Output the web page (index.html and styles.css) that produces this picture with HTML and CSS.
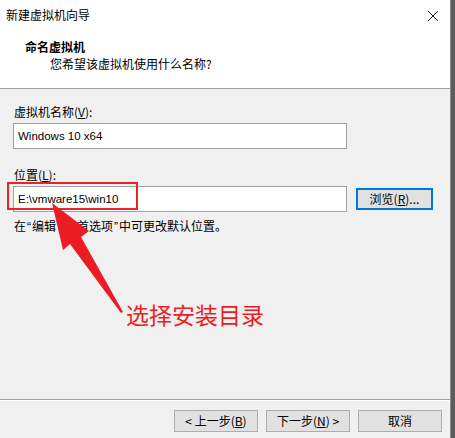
FILE: index.html
```html
<!DOCTYPE html>
<html lang="zh-CN">
<head>
<meta charset="utf-8">
<title>新建虚拟机向导</title>
<link rel="stylesheet" href="styles.css">
</head>
<body>
<div class="screen">
  <div class="window">
    <div class="titlebar">
      <span class="title">新建虚拟机向导</span>
      <svg class="close" width="12" height="12" viewBox="0 0 12 12"><path d="M1 1 L11 11 M11 1 L1 11" stroke="#222" stroke-width="1" fill="none"/></svg>
    </div>
    <div class="header">
      <div class="h-title">命名虚拟机</div>
      <div class="h-sub">您希望该虚拟机使用什么名称?</div>
    </div>
    <div class="content">
      <div class="label">虚拟机名称(<u>V</u>):</div>
      <div class="input wide">Windows 10 x64</div>
      <div class="label second">位置(<u>L</u>):</div>
      <div class="row">
        <div class="input wide">E:\vmware15\win10</div>
        <div class="btn browse">浏览(<u>R</u>)...</div>
      </div>
      <div class="hint">在<span class="q">“</span>编辑<span class="q">”</span><span class="q">&gt;</span><span class="q">“</span>首选项<span class="q">”</span>中可更改默认位置。</div>
    </div>
    <div class="footer">
      <div class="btn">&lt; 上一步(<u>B</u>)</div>
      <div class="btn">下一步(<u>N</u>) &gt;</div>
      <div class="btn">取消</div>
    </div>
    <div class="redbox"></div>
    <svg class="arrow" width="450" height="438" viewBox="0 0 450 438">
      <polygon points="52,203 89,231 81,237 123,312 121,313 70,244 63,250" fill="#ec1c24"/>
    </svg>
    <div class="note">选择安装目录</div>
  </div>
  <div class="edge"></div>
</div>
</body>
</html>
```
FILE: styles.css
```css
* { box-sizing: border-box; }
html, body { margin: 0; padding: 0; }
body {
  width: 455px;
  height: 438px;
  overflow: hidden;
  font-family: "Noto Sans CJK SC", "Noto Sans", sans-serif;
  font-size: 12px;
  color: #000;
  background: #f0f0f0;
}
.screen { display: flex; width: 455px; height: 438px; }
.window {
  position: relative;
  width: 450px;
  height: 438px;
  display: flex;
  flex-direction: column;
  background: #f0f0f0;
}
.edge {
  width: 5px;
  height: 438px;
  background: #5c5c5c;
  border-left: 1px solid #8a8a8a;
}
.titlebar {
  height: 30px;
  background: #fff;
  display: flex;
  align-items: center;
  justify-content: space-between;
  padding: 0 11px 0 6px;
}
.title { line-height: 16px; }
.close { display: block; margin-top: 1px; }
.header {
  height: 59px;
  background: #fff;
  border-bottom: 1px solid #a0a0a0;
  padding: 9px 0 0 25px;
}
.h-title { font-weight: bold; line-height: 16px; }
.h-sub { padding-left: 25px; line-height: 16px; margin-top: 1px; }
.content {
  flex: 1;
  padding: 15px 0 0 13px;
  border-bottom: 1px solid #a0a0a0;
}
.label { line-height: 16px; padding-left: 1px; }
.label.second { margin-top: 18px; }
.input {
  margin-top: 3px;
  height: 26px;
  background: #fff;
  border: 1px solid #a0a0a0;
  padding: 0 4px;
  line-height: 24px;
  font-family: "Liberation Sans", "Noto Sans CJK SC", sans-serif;
  font-size: 11.5px;
}
.wide { width: 334px; }
.row {
  display: flex;
  align-items: center;
  gap: 9px;
  margin-top: 3px;
}
.row .input { margin-top: 0; height: 26px; }
.btn {
  width: 84px;
  height: 22px;
  background: #e1e1e1;
  border: 1px solid #adadad;
  display: flex;
  align-items: center;
  justify-content: center;
  line-height: 16px;
}
.browse {
  width: 77px;
  border: 1px solid #0078d7;
  box-shadow: inset 0 0 0 1px #0078d7;
}
.hint { margin-top: 6px; line-height: 16px; padding-left: 1px; }
.q { font-family: "Liberation Sans", sans-serif; padding: 0 1px; }
.footer {
  height: 38px;
  display: flex;
  justify-content: flex-end;
  gap: 8px;
  padding: 9px 8px 0 0;
  border-top: 1px solid #fff;
}
.redbox {
  position: absolute;
  left: 7px;
  top: 182px;
  width: 131px;
  height: 28px;
  border: 2px solid #e8242b;
}
.arrow { position: absolute; left: 0; top: 0; pointer-events: none; }
.note {
  position: absolute;
  left: 126px;
  top: 299px;
  font-size: 23px;
  line-height: 30px;
  color: #ec1c24;
}
```
